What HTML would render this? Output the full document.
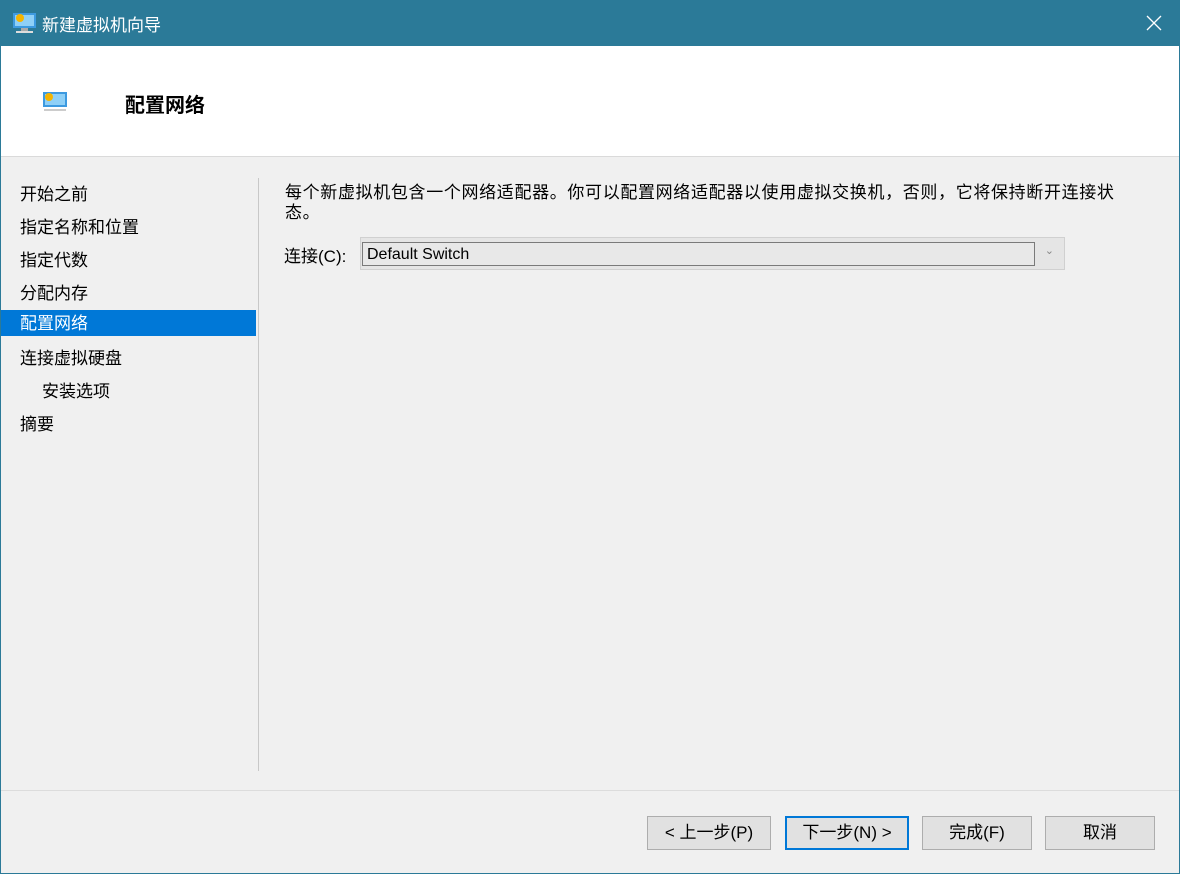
<!DOCTYPE html>
<html><head><meta charset="utf-8"><style>
*{margin:0;padding:0;box-sizing:border-box}
body{width:1180px;height:874px;background:#2b7a98;font-family:"Liberation Sans","Noto Sans CJK SC",sans-serif;position:relative;overflow:hidden;font-size:17px;color:#000}
.t{position:absolute;left:42px;top:11px;color:#fff;font-size:17px}
.win{position:absolute;left:1px;top:46px;width:1178px;height:827px;background:#f0f0f0}
.hdr{position:absolute;left:0;top:0;width:1178px;height:111px;background:#fff;border-bottom:1px solid #dadada}
.h{position:absolute;left:124px;top:43px;font-size:20px;font-weight:bold}
.nav div{position:absolute;left:19px;font-size:17px;height:26px;line-height:26px}
.sel{background:#0078d7;color:#fff;width:255px;left:0!important;padding-left:19px}
.div{position:absolute;left:257px;top:132px;width:1px;height:593px;background:#c8c8c8}
.sep{position:absolute;left:0;top:744px;width:1178px;height:1px;background:#dcdcdc}
.btn{position:absolute;top:770px;height:34px;border:1px solid #adadad;background:#e1e1e1;font-size:17px;text-align:center;line-height:32px}
</style></head><body>
<svg style="position:absolute;left:12px;top:11px" width="26" height="24"><rect x="1" y="2" width="23" height="15" fill="#3d9ae0"/><rect x="3" y="4" width="19" height="11" fill="#8fd0f7"/><circle cx="8" cy="7" r="4" fill="#f4b400"/><rect x="9" y="17" width="7" height="3" fill="#aaa"/><rect x="4" y="20" width="17" height="2" fill="#ddd"/></svg>
<div class="t">新建虚拟机向导</div>
<svg style="position:absolute;left:1146px;top:15px" width="16" height="16"><path d="M1 1L15 15M15 1L1 15" stroke="#fff" stroke-width="1.3"/></svg>
<div class="win">
<div class="hdr"><svg style="position:absolute;left:42px;top:45px" width="24" height="22"><rect x="0" y="1" width="24" height="15" fill="#3d9ae0"/><rect x="2" y="3" width="20" height="11" fill="#8fd0f7"/><circle cx="6" cy="6" r="4" fill="#f4b400"/><rect x="1" y="18" width="22" height="2" fill="#ccc"/></svg><div class="h">配置网络</div></div>
<div class="nav">
<div style="top:136px">开始之前</div>
<div style="top:169px">指定名称和位置</div>
<div style="top:202px">指定代数</div>
<div style="top:235px">分配内存</div>
<div class="sel" style="top:264px;line-height:28px">配置网络</div>
<div style="top:300px">连接虚拟硬盘</div>
<div style="top:333px;left:41px">安装选项</div>
<div style="top:366px">摘要</div>
</div>
<div class="div"></div>
<div style="position:absolute;left:284px;top:137px;width:862px;line-height:20px;letter-spacing:0.65px">每个新虚拟机包含一个网络适配器。你可以配置网络适配器以使用虚拟交换机，否则，它将保持断开连接状态。</div>
<div style="position:absolute;left:283px;top:196px">连接(C):</div>
<div style="position:absolute;left:359px;top:191px;width:705px;height:33px;border:1px solid #d0d0d0;background:#e5e5e5">
<div style="position:absolute;left:1px;top:4px;width:673px;height:24px;border:1px solid #7a7a7a;background:#e8e8e8;font-size:16px;line-height:24px;padding-left:4px">Default Switch</div>
<div style="position:absolute;right:10px;top:6px;font-size:11px;color:#888">⌄</div></div>
<div class="sep"></div>
<div class="btn" style="left:646px;width:124px">&lt; 上一步(P)</div>
<div class="btn" style="left:784px;width:124px;border:2px solid #0078d7;line-height:30px">下一步(N) &gt;</div>
<div class="btn" style="left:921px;width:110px">完成(F)</div>
<div class="btn" style="left:1044px;width:110px">取消</div>
</div>
</body></html>
